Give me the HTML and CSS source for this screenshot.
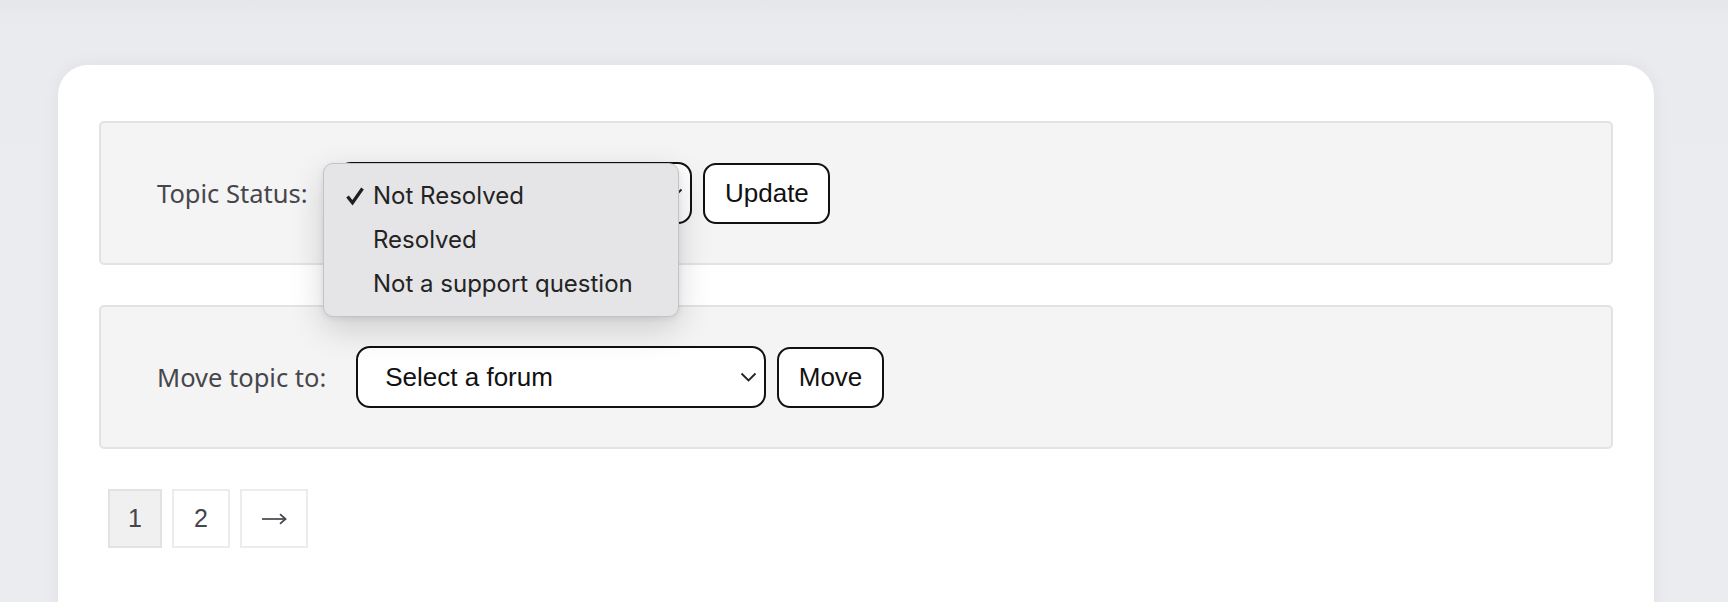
FILE: index.html
```html
<!DOCTYPE html>
<html>
<head>
<meta charset="utf-8">
<link rel="stylesheet" href="styles.css">
</head>
<body>
<div class="card">
  <div class="panel">
    <span class="label">Topic Status:</span>
    <div class="select select-status">
      <span class="select-text">Not Resolved</span>
      <svg class="chev" width="17" height="10" viewBox="0 0 17 10"><polyline points="1.5,1.5 8.5,8.5 15.5,1.5" fill="none" stroke="#222" stroke-width="1.8"/></svg>
    </div>
    <button class="btn">Update</button>
    <div class="popup">
      <div class="opt"><svg class="check" width="20" height="20" viewBox="0 0 20 20"><path d="M2.5 10.5 L7.5 16.8 L17.5 2.5" fill="none" stroke="#1f1f1f" stroke-width="3.3" stroke-linejoin="miter"/></svg>Not Resolved</div>
      <div class="opt">Resolved</div>
      <div class="opt">Not a support question</div>
    </div>
  </div>
  <div class="panel">
    <span class="label">Move topic to:</span>
    <div class="select select-forum">
      <span class="select-text">Select a forum</span>
      <svg class="chev" width="17" height="10" viewBox="0 0 17 10"><polyline points="1.5,1.5 8.5,8.5 15.5,1.5" fill="none" stroke="#222" stroke-width="1.8"/></svg>
    </div>
    <button class="btn">Move</button>
  </div>
  <div class="pagination">
    <span class="page current">1</span>
    <span class="page">2</span>
    <span class="page arrow"><svg width="26" height="12" viewBox="0 0 26 12" aria-label="→"><line x1="1" y1="6" x2="24.5" y2="6" stroke="#45454b" stroke-width="1.7"/><polyline points="19,1.2 24.6,6 19,10.8" fill="none" stroke="#45454b" stroke-width="1.7"/></svg></span>
  </div>
</div>
</body>
</html>
```
FILE: styles.css
```css
html, body {
  margin: 0;
  padding: 0;
}
body {
  background: linear-gradient(#e6e7eb 0, #eaebef 30px, #ebecf0 100%);
  padding: 65px 74px 0 58px;
  height: 602px;
  box-sizing: border-box;
  overflow: hidden;
}
.card {
  background: #ffffff;
  border-radius: 30px;
  box-shadow: 0 0 18px rgba(0, 0, 0, 0.05);
  padding: 56px 41px 80px 41px;
  min-height: 700px;
  box-sizing: border-box;
}
.panel {
  position: relative;
  display: flex;
  align-items: center;
  background: #f4f4f4;
  border: 2px solid #e3e3e3;
  border-radius: 5px;
  padding: 39px 56px;
  margin-bottom: 40px;
}
.label {
  font-family: "Noto Sans", "Open Sans", sans-serif;
  font-size: 25.5px;
  color: #46464c;
  margin-right: 30px;
  white-space: nowrap;
}
.select {
  display: flex;
  align-items: center;
  justify-content: space-between;
  box-sizing: border-box;
  height: 62px;
  background: #ffffff;
  border: 2px solid #111111;
  border-radius: 14px;
  padding: 0 7px 0 27px;
  font-family: "Liberation Sans", Arial, sans-serif;
  font-size: 26px;
  color: #111111;
}
.select-status {
  width: 355px;
}
.select-forum {
  width: 410px;
}
.chev {
  display: block;
}
.btn {
  box-sizing: border-box;
  height: 61px;
  margin-left: 11px;
  padding: 0 19.5px;
  background: #ffffff;
  border: 2px solid #111111;
  border-radius: 13px;
  font-family: "Liberation Sans", Arial, sans-serif;
  font-size: 26px;
  color: #111111;
}
.popup {
  position: absolute;
  left: 222px;
  top: 40px;
  width: 356px;
  box-sizing: border-box;
  padding: 10px 0;
  background: #e5e5e7;
  border: 1px solid #c3c3c5;
  border-radius: 10px;
  box-shadow: 0 12px 34px rgba(0, 0, 0, 0.16), 0 2px 6px rgba(0, 0, 0, 0.08);
  z-index: 5;
}
.opt {
  position: relative;
  height: 44px;
  line-height: 44px;
  padding-left: 49px;
  font-family: Inter, "Noto Sans", sans-serif;
  font-size: 24px;
  color: #232323;
  white-space: nowrap;
}
.check {
  position: absolute;
  left: 21px;
  top: 12px;
}
.pagination {
  display: flex;
  gap: 10px;
  margin-left: 9px;
}
.page {
  box-sizing: border-box;
  height: 59px;
  min-width: 58px;
  padding: 0 18px;
  display: flex;
  align-items: center;
  justify-content: center;
  border: 2px solid #ececec;
  background: #ffffff;
  font-family: "Liberation Sans", Arial, sans-serif;
  font-size: 25px;
  color: #45454b;
}
.page.current {
  min-width: 54px;
  background: #f0f0f0;
  border-color: #e2e2e2;
}
.page.arrow {
  min-width: 68px;
}
.page.arrow svg {
  display: block;
}
```
